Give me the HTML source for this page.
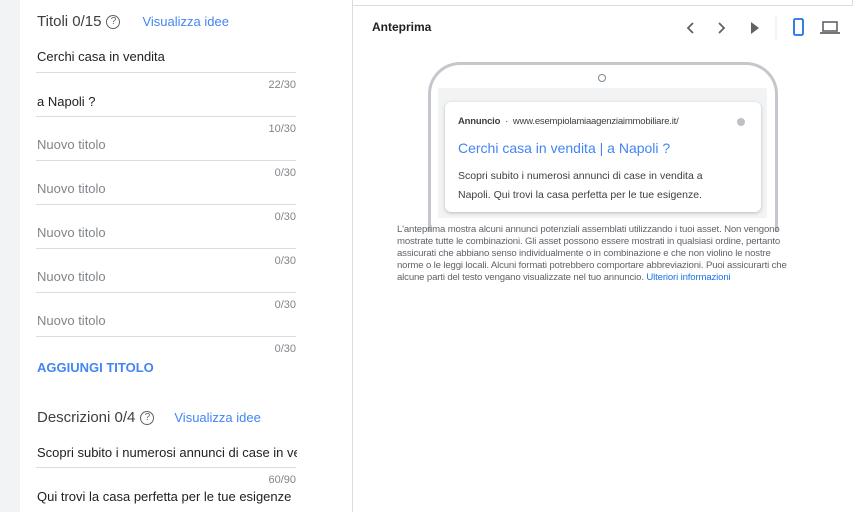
<!DOCTYPE html>
<html><head><meta charset="utf-8"><style>
*{margin:0;padding:0;box-sizing:border-box}
body{width:860px;height:512px;overflow:hidden;background:#fff;font-family:"Liberation Sans",Arial,sans-serif;position:relative;color:#202124}
.abs{position:absolute}
.gray{left:0;top:0;width:20px;height:512px;background:#f1f3f4}
.card{left:20px;top:0;width:333px;height:512px;background:#fff;border-right:1px solid #dadce0}
.t{position:absolute;left:37px;font-size:13px;white-space:nowrap}
.ph{color:#80868b}
.line{position:absolute;left:36px;width:260px;height:1px;background:#dadce0}
.cnt{position:absolute;right:564px;font-size:11px;color:#80868b}
.h{font-size:15px;color:#3c4043}
.link{color:#4285f4;font-size:13px}
.q{display:inline-block;width:14px;height:14px;border:1px solid #5f6368;border-radius:50%;font-size:10px;text-align:center;line-height:12px;color:#5f6368;vertical-align:2px;margin-left:5px}
</style></head><body>
<div class="abs gray"></div>
<div class="abs card"></div>
<div class="abs" style="left:353px;top:0;width:500px;height:6px;border-bottom:1px solid #dadce0;border-right:1px solid #dadce0"></div>
<div class="t h" style="top:13px">Titoli 0/15<span class="q">?</span><span class="link" style="margin-left:22px">Visualizza idee</span></div>
<div class="t" style="top:49px">Cerchi casa in vendita</div>
<div class="line" style="top:72px"></div><div class="cnt" style="top:79px">22/30</div>
<div class="t" style="top:94px">a Napoli ?</div>
<div class="line" style="top:116px"></div><div class="cnt" style="top:123px">10/30</div>
<div class="t ph" style="top:137px">Nuovo titolo</div>
<div class="line" style="top:160px"></div><div class="cnt" style="top:167px">0/30</div>
<div class="t ph" style="top:181px">Nuovo titolo</div>
<div class="line" style="top:204px"></div><div class="cnt" style="top:211px">0/30</div>
<div class="t ph" style="top:225px">Nuovo titolo</div>
<div class="line" style="top:248px"></div><div class="cnt" style="top:255px">0/30</div>
<div class="t ph" style="top:269px">Nuovo titolo</div>
<div class="line" style="top:292px"></div><div class="cnt" style="top:299px">0/30</div>
<div class="t ph" style="top:313px">Nuovo titolo</div>
<div class="line" style="top:336px"></div><div class="cnt" style="top:343px">0/30</div>
<div class="t" style="top:360px;color:#4285f4;font-weight:bold">AGGIUNGI TITOLO</div>
<div class="t h" style="top:409px">Descrizioni 0/4<span class="q">?</span><span class="link" style="margin-left:20px">Visualizza idee</span></div>
<div class="t" style="top:445px;width:260px;overflow:hidden">Scopri subito i numerosi annunci di case in vendita</div>
<div class="line" style="top:467px"></div><div class="cnt" style="top:474px">60/90</div>
<div class="t" style="top:489px">Qui trovi la casa perfetta per le tue esigenze</div>

<div class="abs" style="left:372px;top:20px;font-size:12px;font-weight:bold;color:#202124">Anteprima</div>
<svg class="abs" style="left:680px;top:16px" width="170" height="24" viewBox="0 0 170 24">
<path d="M13 7l-5 5 5 5" fill="none" stroke="#5f6368" stroke-width="1.8"/>
<path d="M39 7l5 5-5 5" fill="none" stroke="#5f6368" stroke-width="1.8"/>
<path d="M71 6l8 6-8 6z" fill="#5f6368"/>
<line x1="96" y1="-5" x2="96" y2="26" stroke="#e8eaed"/>
<rect x="114" y="3" width="9" height="16" rx="1.5" fill="none" stroke="#1a73e8" stroke-width="1.8"/>
<rect x="143" y="6" width="14" height="9" fill="none" stroke="#5f6368" stroke-width="1.6"/>
<line x1="140" y1="17" x2="160" y2="17" stroke="#5f6368" stroke-width="1.8"/>
</svg>
<div class="abs" style="left:428px;top:62px;width:350px;height:170px;border:3px solid #c4c7cb;border-bottom:none;border-radius:32px 32px 0 0"></div>
<div class="abs" style="left:598px;top:74px;width:8px;height:8px;border:1px solid #80868b;border-radius:50%"></div>
<div class="abs" style="left:438px;top:88px;width:329px;height:130px;background:#f1f3f4"></div>
<div class="abs" style="left:445px;top:102px;width:316px;height:110px;background:#fff;border-radius:6px;box-shadow:0 1px 3px rgba(60,64,67,.3)"></div>
<div class="abs" style="left:458px;top:116px;font-size:9.5px;color:#3c4043;white-space:nowrap;letter-spacing:-0.2px"><b>Annuncio</b> &nbsp;·&nbsp; www.esempiolamiaagenziaimmobiliare.it/</div>
<div class="abs" style="left:737px;top:118px;width:8px;height:8px;border-radius:50%;background:#bdc1c6"></div>
<div class="abs" style="left:458px;top:140px;font-size:14px;color:#4285f4;white-space:nowrap">Cerchi casa in vendita | a Napoli ?</div>
<div class="abs" style="left:458px;top:167px;width:262px;font-size:10.5px;line-height:19px;color:#3c4043">Scopri subito i numerosi annunci di case in vendita a Napoli. Qui trovi la casa perfetta per le tue esigenze.</div>
<div class="abs" style="left:397px;top:224px;width:400px;font-size:9.6px;line-height:12px;color:#5f6368;letter-spacing:-0.15px">L'anteprima mostra alcuni annunci potenziali assemblati utilizzando i tuoi asset. Non vengono mostrate tutte le combinazioni. Gli asset possono essere mostrati in qualsiasi ordine, pertanto assicurati che abbiano senso individualmente o in combinazione e che non violino le nostre norme o le leggi locali. Alcuni formati potrebbero comportare abbreviazioni. Puoi assicurarti che alcune parti del testo vengano visualizzate nel tuo annuncio. <span style="color:#1a73e8">Ulteriori informazioni</span></div>
</body></html>
